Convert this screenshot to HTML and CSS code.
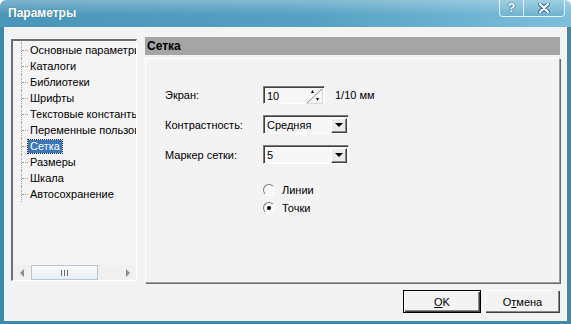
FILE: index.html
```html
<!DOCTYPE html>
<html lang="ru">
<head>
    <meta charset="UTF-8">
    <title>Параметры</title>
    <link rel="stylesheet" href="styles.css">
</head>
<body>
    <div class="window">
        <div class="titlebar">
            <span class="title">Параметры</span>
            <div class="title-buttons">
                <span class="tbtn help">?</span>
                <span class="tbtn close">
                    <svg width="12" height="10" viewBox="0 0 12 10">
                        <path d="M2 1 L10 9 M10 1 L2 9" stroke="#2d6a86" stroke-width="4" stroke-linecap="round"/>
                        <path d="M2 1 L10 9 M10 1 L2 9" stroke="#fff" stroke-width="2.2" stroke-linecap="round"/>
                    </svg>
                </span>
            </div>
        </div>

        <div class="client">
            <div class="main">
                <div class="tree">
                    <ul class="tree-list">
                        <li><span>Основные параметры</span></li>
                        <li><span>Каталоги</span></li>
                        <li><span>Библиотеки</span></li>
                        <li><span>Шрифты</span></li>
                        <li><span>Текстовые константы</span></li>
                        <li><span>Переменные пользователя</span></li>
                        <li class="selected"><span>Сетка</span></li>
                        <li><span>Размеры</span></li>
                        <li><span>Шкала</span></li>
                        <li><span>Автосохранение</span></li>
                    </ul>
                    <div class="hscroll">
                        <span class="sb-btn"><i class="tri-left"></i></span>
                        <span class="thumb">
                            <svg width="7" height="6" viewBox="0 0 7 6">
                                <path d="M0.5 0 V6 M3.5 0 V6 M6.5 0 V6" stroke="#6a6a6a" stroke-width="1"/>
                            </svg>
                        </span>
                        <span class="track"></span>
                        <span class="sb-btn"><i class="tri-right"></i></span>
                    </div>
                </div>

                <div class="pane">
                    <div class="pane-header">Сетка</div>
                    <div class="pane-body">
                        <div class="form">
                            <label>Экран:</label>
                            <div class="field">
                                <div class="spin">
                                    <span class="value">10</span>
                                    <svg class="spin-btn" width="17" height="16" viewBox="0 0 17 16">
                                        <path d="M0.5 15.5 L16.5 0.5" stroke="#8a8a8a" stroke-width="1"/>
                                        <path d="M5 5 L8 5 L6.5 2 Z" fill="#000"/>
                                        <path d="M10 10 L13 10 L11.5 13 Z" fill="#000"/>
                                        <path d="M16.5 0 L16.5 16 M0 15.5 L17 15.5" stroke="#d8d8d8" stroke-width="1"/>
                                    </svg>
                                </div>
                                <span class="unit">1/10 мм</span>
                            </div>

                            <label>Контрастность:</label>
                            <div class="field">
                                <div class="combo">
                                    <span class="value">Средняя</span>
                                    <span class="drop"><i class="tri-down"></i></span>
                                </div>
                            </div>

                            <label>Маркер сетки:</label>
                            <div class="field">
                                <div class="combo">
                                    <span class="value">5</span>
                                    <span class="drop"><i class="tri-down"></i></span>
                                </div>
                            </div>
                        </div>

                        <div class="radios">
                            <div class="radio-row"><span class="radio"></span>Линии</div>
                            <div class="radio-row"><span class="radio checked"></span>Точки</div>
                        </div>
                    </div>
                </div>
            </div>

            <div class="buttons">
                <button class="btn default"><u>O</u>K</button>
                <button class="btn">О<u>т</u>мена</button>
            </div>
        </div>
    </div>
</body>
</html>
```

FILE: styles.css
```css
* {
    margin: 0;
    padding: 0;
    box-sizing: border-box;
}
body {
    background: #fff;
    font-family: "Liberation Sans", Arial, sans-serif;
    font-size: 11px;
    color: #000;
}
.window {
    width: 571px;
    height: 324px;
    display: flex;
    flex-direction: column;
}
.titlebar {
    height: 27px;
    display: flex;
    justify-content: space-between;
    align-items: flex-start;
    padding: 0 8px 0 8px;
    border-radius: 6px 6px 0 0;
    background:
        linear-gradient(to bottom, rgba(255, 255, 255, 0.28), rgba(255, 255, 255, 0) 55%),
        linear-gradient(to right, #4a96b8 0%, #56a1c2 55%, #7dbfdb 100%);
}
.title {
    line-height: 27px;
    font-size: 12px;
    font-weight: bold;
    color: #fff;
    text-shadow: 0 0 1px #2d6a86;
}
.title-buttons {
    display: flex;
    margin-right: -2px;
}
.tbtn {
    height: 17px;
    display: flex;
    align-items: center;
    justify-content: center;
    border: 1px solid rgba(255, 255, 255, 0.75);
    border-top: none;
    background: linear-gradient(to bottom, #9fd0e4, #6eb2d0);
    color: #fff;
}
.help {
    width: 25px;
    border-radius: 0 0 0 4px;
    font-size: 12px;
    font-weight: bold;
    text-shadow: 0 0 2px #2d6a86, 0 0 1px #2d6a86;
}
.close {
    width: 41px;
    border-left: none;
    border-radius: 0 0 4px 0;
}

.client {
    flex: 1;
    display: flex;
    flex-direction: column;
    background: #f3f3f3;
    border: 4px solid #3f88a8;
    border-top: none;
    border-bottom-width: 3px;
    padding: 10px 7px 8px 7px;
}
.main {
    display: flex;
    gap: 8px;
    height: 246px;
}

/* tree */
.tree {
    width: 126px;
    height: 242px;
    margin-top: 2px;
    display: flex;
    flex-direction: column;
    border-top: 2px solid #6e6e6e;
    border-left: 2px solid #6e6e6e;
    border-right: 1px solid #fff;
    border-bottom: 1px solid #fff;
    background: #f4f4f4;
}
.tree-list {
    flex: 1;
    list-style: none;
    overflow: hidden;
    white-space: nowrap;
    padding-top: 1px;
}
.tree-list li {
    height: 16px;
    margin-left: 8px;
    display: flex;
    align-items: center;
    border-left: 1px dotted #a0a0a0;
}
.tree-list li::before {
    content: "";
    flex-shrink: 0;
    width: 6px;
    border-top: 1px dotted #a0a0a0;
}
.tree-list li span {
    flex-shrink: 0;
    padding: 0 2px;
    line-height: 13px;
}
.tree-list li.selected span {
    background: #3a77b6;
    color: #fff;
    outline: 1px dotted #1c2a40;
}
.hscroll {
    height: 15px;
    display: flex;
    align-items: stretch;
    background: #f0f0f0;
}
.sb-btn {
    width: 17px;
    display: flex;
    align-items: center;
    justify-content: center;
}
.tri-left, .tri-right, .tri-down {
    display: block;
    width: 0;
    height: 0;
}
.tri-left {
    border-top: 4px solid transparent;
    border-bottom: 4px solid transparent;
    border-right: 4px solid #8a8a8a;
}
.tri-right {
    border-top: 4px solid transparent;
    border-bottom: 4px solid transparent;
    border-left: 4px solid #8a8a8a;
}
.thumb {
    width: 67px;
    margin-left: 1px;
    border: 1px solid #b6c6d6;
    background: linear-gradient(to bottom, #fbfcfd, #e9eef3);
    display: flex;
    align-items: center;
    justify-content: center;
}
.track {
    flex: 1;
}

/* right pane */
.pane {
    flex: 1;
    display: flex;
    flex-direction: column;
}
.pane-header {
    height: 18px;
    background: #a5a5a5;
    font-size: 12px;
    font-weight: bold;
    line-height: 18px;
    padding-left: 2px;
}
.pane-body {
    flex: 1;
    margin-top: 3px;
    border-top: 1px solid #fff;
    border-left: 1px solid #fff;
    border-right: 1px solid #a0a0a0;
    border-bottom: 1px solid #a0a0a0;
    box-shadow: 1px 1px 0 #6a6a6a;
    padding: 27px 0 0 19px;
}
.form {
    display: grid;
    grid-template-columns: 98px auto;
    row-gap: 11px;
    align-items: center;
}
.field {
    display: flex;
    align-items: center;
    gap: 10px;
}
.spin, .combo {
    display: flex;
    align-items: center;
    justify-content: space-between;
    border-top: 1px solid #7a7a7a;
    border-left: 1px solid #7a7a7a;
    border-right: 1px solid #fff;
    border-bottom: 1px solid #fff;
    box-shadow: inset 1px 1px 0 #404040;
    background: #f7f7f7;
}
.spin {
    width: 62px;
    height: 18px;
    padding: 0 1px 0 3px;
}
.combo {
    width: 86px;
    height: 19px;
    padding: 0 1px 0 3px;
}
.value {
    padding-top: 1px;
}
.spin-btn {
    display: block;
    margin-top: 1px;
}
.drop {
    width: 16px;
    height: 15px;
    margin-top: 1px;
    display: flex;
    align-items: center;
    justify-content: center;
    background: #ecebe8;
    border-top: 1px solid #fff;
    border-left: 1px solid #fff;
    border-right: 1px solid #404040;
    border-bottom: 1px solid #404040;
    box-shadow: inset -1px -1px 0 #8a8a8a;
}
.tri-down {
    border-left: 4px solid transparent;
    border-right: 4px solid transparent;
    border-top: 4px solid #000;
}
.unit {
    font-size: 11px;
}
.radios {
    margin: 17px 0 0 98px;
}
.radio-row {
    height: 18px;
    display: flex;
    align-items: center;
    gap: 7px;
}
.radio {
    width: 12px;
    height: 12px;
    border-radius: 50%;
    border: 1px solid;
    border-color: #7a7a7a #fff #fff #7a7a7a;
    background: #f7f7f7;
    display: flex;
    align-items: center;
    justify-content: center;
}
.radio.checked::after {
    content: "";
    width: 4px;
    height: 4px;
    border-radius: 50%;
    background: #000;
}

/* bottom buttons */
.buttons {
    margin-top: 7px;
    display: flex;
    justify-content: flex-end;
    gap: 4px;
}
.btn {
    height: 23px;
    width: 75px;
    font-family: "Liberation Sans", Arial, sans-serif;
    font-size: 11px;
    color: #000;
    background: #f3f3f3;
    border: none;
    box-shadow: inset 1px 1px 0 #fff, inset -1px -1px 0 #404040, inset -2px -2px 0 #8a8a8a;
}
.btn.default {
    width: 78px;
    border: 1px solid #000;
}
.btn u {
    text-underline-offset: 1px;
}
```
